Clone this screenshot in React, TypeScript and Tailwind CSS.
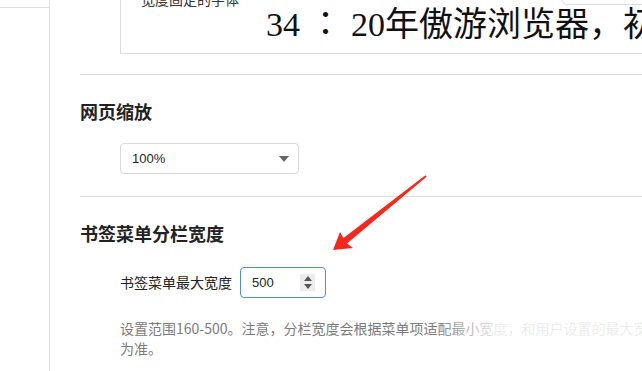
const sans = "font-[family-name:'Noto_Sans_CJK_SC','Liberation_Sans',sans-serif]";

function Arrow() {
  return (
    <svg
      className="pointer-events-none absolute left-0 top-0"
      width="642"
      height="371"
      viewBox="0 0 642 371"
    >
      <polygon
        points="333,250 340,232 343.5,238 425.4,175.2 426.6,176.8 347,243.5 353,248"
        fill="#f5281b"
      />
    </svg>
  );
}

function FontBox() {
  return (
    <div className="relative ml-[40px] -mt-[11px] border-b border-l border-[#dcdcdc] pb-[10px] pl-[20px]">
      <div className="text-[14px] leading-[20px] text-[#333]">宽度固定的字体</div>
      <div className="-mt-[3px] whitespace-nowrap pl-[125px] font-[family-name:'Liberation_Serif','Noto_Sans_CJK_JP',serif] text-[34px] leading-[37px] text-[#111]">
        34 ： 20年傲游浏览器，初
      </div>
    </div>
  );
}

function Select() {
  return (
    <div className="flex h-[31px] w-[179px] items-center justify-between rounded-[4px] border border-[#d9d9d9] bg-white pl-[11px] pr-[9px]">
      <span className="font-[family-name:'Liberation_Sans',sans-serif] text-[13px] text-[#222]">100%</span>
      <span className="h-0 w-0 border-x-[5px] border-t-[6px] border-x-transparent border-t-[#666]" />
    </div>
  );
}

function NumberInput() {
  return (
    <div className="flex h-[31px] w-[86px] items-center justify-between rounded-[4px] border border-[#4f8fdc] bg-white pl-[11px] pr-[10px]">
      <span className="font-[family-name:'Liberation_Sans',sans-serif] text-[13px] text-[#222]">500</span>
      <span className="flex h-[17px] w-[15px] flex-col items-center justify-center gap-[3px] bg-[#ececec]">
        <span className="h-0 w-0 border-x-[4px] border-b-[5px] border-x-transparent border-b-[#555]" />
        <span className="h-0 w-0 border-x-[4px] border-t-[5px] border-x-transparent border-t-[#555]" />
      </span>
    </div>
  );
}

export default function App() {
  return (
    <div className={`relative flex h-[371px] w-[642px] overflow-hidden bg-white ${sans}`}>
      <aside className="w-[50px] shrink-0 border-r border-[#dcdcdc]">
        <div className="h-[8px] border-b border-[#dcdcdc]" />
      </aside>

      <main className="min-w-0 flex-1 pl-[30px]">
        <FontBox />

        <section className="mt-[20px] border-t border-[#dcdcdc] pb-[22px] pt-[24px]">
          <h2 className="text-[18px] font-bold leading-[24px] text-[#222]">网页缩放</h2>
          <div className="ml-[40px] mt-[20px]">
            <Select />
          </div>
        </section>

        <section className="border-t border-[#dcdcdc] pt-[24px]">
          <h2 className="text-[18px] font-bold leading-[24px] text-[#222]">书签菜单分栏宽度</h2>
          <div className="ml-[40px] mt-[22px] flex items-center gap-[8px]">
            <span className="text-[14px] text-[#222]">书签菜单最大宽度</span>
            <NumberInput />
          </div>
          <p className="ml-[40px] mt-[20px] whitespace-nowrap text-[14px] leading-[20px] text-[#7b7b7b]">
            设置范围160-500。注意，分栏宽度会根据菜单项适配最小宽度，和用户设置的最大宽度取较大值
            <br />
            为准。
          </p>
        </section>
      </main>

      <div className="absolute right-[-10px] top-[-20px] h-[25px] w-[90px] rounded-[5px] border border-[#dcdcdc] bg-white" />
      <div className="pointer-events-none absolute left-[435px] top-[312px] h-[30px] w-[207px] bg-linear-to-r from-white/0 via-white/85 via-30% to-white/85" />
      <Arrow />
    </div>
  );
}
